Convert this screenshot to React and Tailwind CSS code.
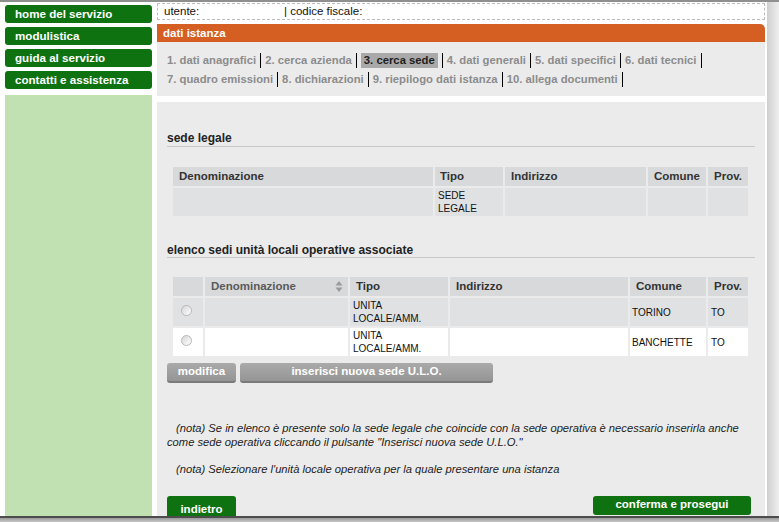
import React from "react";

const font = { fontFamily: '"Liberation Sans", Arial, sans-serif' };

function Sep() {
  return <span className="inline-block w-px h-[15px] bg-black mx-[4px]" />;
}

function Steps({ items }) {
  return (
    <div className="flex items-center h-[19px]">
      {items.map((s) => (
        <React.Fragment key={s.label}>
          <span
            className={
              s.active
                ? "bg-[#a9a9a9] text-[#1e1e1e] px-[3px] leading-[15px]"
                : "text-[#8c8c8c]"
            }
          >
            {s.label}
          </span>
          <Sep />
        </React.Fragment>
      ))}
    </div>
  );
}

function Radio() {
  return (
    <span className="inline-block w-[11px] h-[11px] rounded-full border border-[#b8b8b8] bg-gradient-to-br from-[#d6d6d6] to-white" />
  );
}

function GrayButton({ children, className }) {
  return (
    <button
      className={
        "h-[20px] rounded-[3px] bg-gradient-to-b from-[#aaaaaa] to-[#959595] border-b-2 border-[#7a7a7a] text-white font-bold text-[11.5px] leading-none " +
        className
      }
    >
      {children}
    </button>
  );
}

export default function App() {
  const nav = [
    "home del servizio",
    "modulistica",
    "guida al servizio",
    "contatti e assistenza",
  ];

  const rows = [
    { bg: "bg-[#dfe1e3]", comune: "TORINO" },
    { bg: "bg-white", comune: "BANCHETTE" },
  ];

  return (
    <div
      className="w-[779px] h-[522px] overflow-hidden bg-white border-t-2 border-[#8f8f8f] flex flex-col"
      style={font}
    >
      <div className="flex flex-1 min-h-0">
        {/* sidebar */}
        <div className="ml-[5px] w-[147px] pt-[3px] flex flex-col">
          {nav.map((n) => (
            <div
              key={n}
              className="h-[18px] mb-[4px] rounded-[3px] bg-[#0f7211] text-white font-bold text-[11.6px] leading-[18px] pl-[10px]"
            >
              {n}
            </div>
          ))}
          <div className="flex-1 mt-[2px] bg-[#c2e1b2]" />
        </div>

        {/* main */}
        <div className="ml-[5px] w-[608px] pt-[1px] flex flex-col">
          <div className="h-[17px] border border-dashed border-[#bdbdbd] flex items-center text-[11.5px] text-[#111] pl-[6px]">
            <span className="w-[120px]">utente:</span>
            <span>| codice fiscale:</span>
          </div>

          <div className="mt-[4px] h-[18px] bg-[#d55e23] rounded-tr-[5px] text-white font-bold text-[11.5px] leading-[18px] pl-[6px]">
            dati istanza
          </div>

          <div className="h-[54px] bg-[#ebebeb] pl-[10px] pt-[9px] font-bold text-[11.3px]">
            <Steps
              items={[
                { label: "1. dati anagrafici" },
                { label: "2. cerca azienda" },
                { label: "3. cerca sede", active: true },
                { label: "4. dati generali" },
                { label: "5. dati specifici" },
                { label: "6. dati tecnici" },
              ]}
            />
            <Steps
              items={[
                { label: "7. quadro emissioni" },
                { label: "8. dichiarazioni" },
                { label: "9. riepilogo dati istanza" },
                { label: "10. allega documenti" },
              ]}
            />
          </div>

          <div className="mt-[6px] flex-1 bg-[#ebebeb] px-[10px] pt-[29px] overflow-hidden">
            <div className="font-bold text-[12px] leading-[14px] text-[#222] pb-[1px] border-b border-[#c9c9c9]">
              sede legale
            </div>

            <table className="mt-[18px] ml-[4px] w-[579px] table-fixed border-separate border-spacing-[2px] text-[#333]">
              <thead>
                <tr className="bg-[#d7d9db] font-bold text-[11.5px] h-[19px] text-left">
                  <th className="w-[260px] pl-[6px]">Denominazione</th>
                  <th className="w-[68px] pl-[5px]">Tipo</th>
                  <th className="w-[141px] pl-[6px]">Indirizzo</th>
                  <th className="w-[58px] pl-[6px]">Comune</th>
                  <th className="w-[40px] pl-[6px]">Prov.</th>
                </tr>
              </thead>
              <tbody>
                <tr className="bg-[#dfe1e3] h-[28px] text-[10px] leading-[13px] text-[#111]">
                  <td />
                  <td className="pl-[3px]">
                    SEDE
                    <br />
                    LEGALE
                  </td>
                  <td />
                  <td />
                  <td />
                </tr>
              </tbody>
            </table>

            <div className="mt-[25px] font-bold text-[12px] leading-[14px] text-[#222] border-b border-[#c9c9c9]">
              elenco sedi unità locali operative associate
            </div>

            <table className="mt-[17px] ml-[4px] w-[579px] table-fixed border-separate border-spacing-[2px] text-[#333]">
              <thead>
                <tr className="bg-[#d7d9db] font-bold text-[11.5px] h-[19px] text-left">
                  <th className="w-[30px]" />
                  <th className="w-[143px] pl-[6px] text-[#5a5a5a]">
                    <div className="flex items-center justify-between pr-[5px]">
                      <span>Denominazione</span>
                      <svg width="8" height="13" viewBox="0 0 8 13">
                        <path d="M4 1 L7.5 5.5 H0.5 Z" fill="#9a9a9a" />
                        <path d="M4 12 L7.5 7.5 H0.5 Z" fill="#9a9a9a" />
                      </svg>
                    </div>
                  </th>
                  <th className="w-[98px] pl-[6px]">Tipo</th>
                  <th className="w-[178px] pl-[6px]">Indirizzo</th>
                  <th className="w-[76px] pl-[6px]">Comune</th>
                  <th className="w-[40px] pl-[6px]">Prov.</th>
                </tr>
              </thead>
              <tbody>
                {rows.map((r) => (
                  <tr
                    key={r.comune}
                    className={r.bg + " h-[28px] text-[10px] leading-[13px] text-[#111]"}
                  >
                    <td className="pl-[8px] align-middle">
                      <Radio />
                    </td>
                    <td />
                    <td className="pl-[3px]">
                      UNITA
                      <br />
                      LOCALE/AMM.
                    </td>
                    <td />
                    <td className="pl-[2px]">{r.comune}</td>
                    <td className="pl-[3px]">TO</td>
                  </tr>
                ))}
              </tbody>
            </table>

            <div className="mt-[5px] flex gap-[4px]">
              <GrayButton className="w-[69px]">modifica</GrayButton>
              <GrayButton className="w-[253px]">inserisci nuova sede U.L.O.</GrayButton>
            </div>

            <p className="mt-[38px] italic text-[11.2px] leading-[14px] text-[#222] indent-[9px]">
              (nota) Se in elenco è presente solo la sede legale che coincide con la sede operativa è
              necessario inserirla anche come sede operativa cliccando il pulsante "Inserisci nuova
              sede U.L.O."
            </p>
            <p className="mt-[13px] italic text-[11.2px] leading-[14px] text-[#222] indent-[9px]">
              (nota) Selezionare l'unità locale operativa per la quale presentare una istanza
            </p>

            <div className="mt-[20px] flex justify-between pr-[4px]">
              <button className="w-[69px] h-[22px] rounded-[3px] bg-[#0f7211] text-white font-bold text-[11.5px] pt-[6px] leading-none">
                indietro
              </button>
              <button className="w-[158px] h-[19px] rounded-[3px] bg-[#0f7211] text-white font-bold text-[11.5px] leading-none pb-[2px]">
                conferma e prosegui
              </button>
            </div>
          </div>
        </div>

        {/* right frame edge */}
        <div className="ml-[2px] flex-1 bg-gradient-to-r from-[#cfcfcf] to-[#efefef]" />
      </div>

      <div className="h-[6px] border-t-2 border-[#4d4d4d] bg-gradient-to-b from-[#9a9a9a] to-[#c8c8c8]" />
    </div>
  );
}
